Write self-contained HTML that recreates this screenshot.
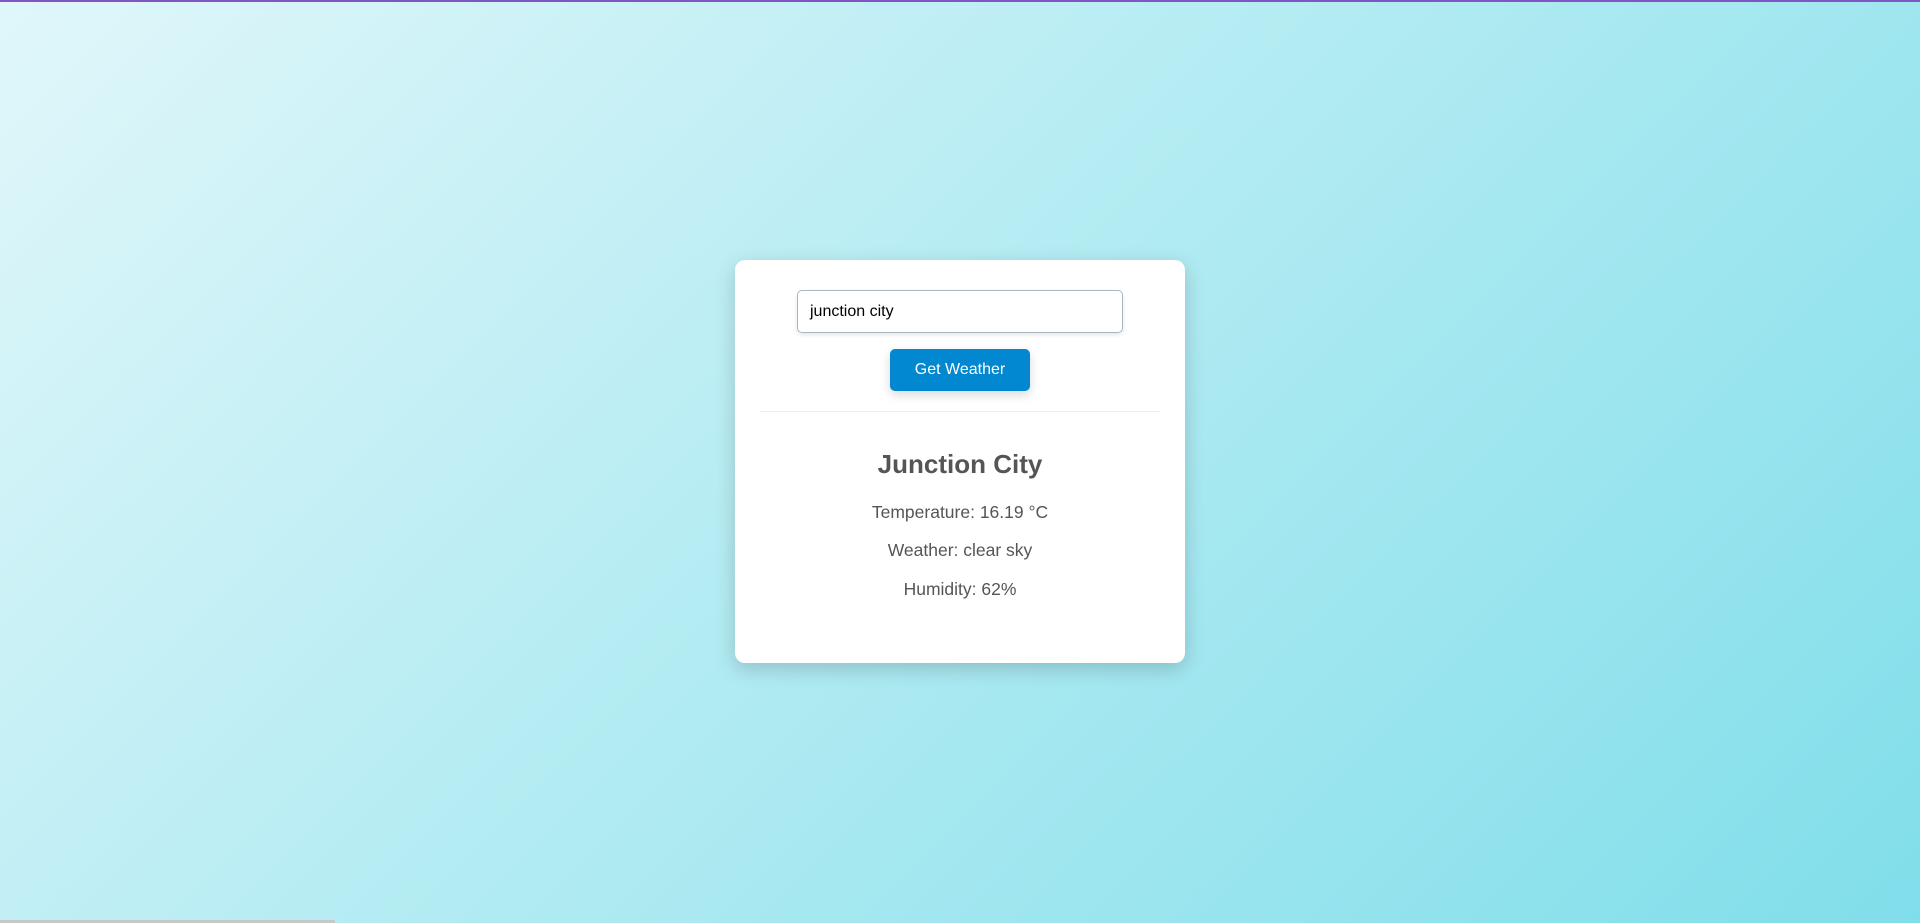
<!DOCTYPE html>
<html><head><style>
html,body{margin:0;height:923px;width:1920px;overflow:hidden}
body{background:linear-gradient(135deg,#e0f7fa 0%,#80deea 100%);font-family:"Liberation Sans",Arial,sans-serif;position:relative}
.top{position:absolute;top:0;left:0;right:0;height:2px;background:#7e57c2}
.bot{position:absolute;bottom:0;left:0;width:335px;height:3px;background:#c8c8c8}
.card{position:absolute;left:735px;top:260px;width:450px;height:403px;background:#fff;border-radius:10px;box-shadow:0 6px 20px rgba(0,0,0,0.18)}
.inp{position:absolute;left:62px;top:30px;border:1px solid #a9b7c2;border-radius:5px;box-shadow:0 2px 4px rgba(0,0,0,0.1);font-size:16px;line-height:41px;padding-left:12px;box-sizing:border-box;width:326px;height:43px;color:#000}
.btn{position:absolute;left:155px;top:89px;width:140px;height:42px;background:#0288d1;border-radius:5px;color:#fff;font-size:16px;text-align:center;line-height:42px;box-shadow:0 4px 10px rgba(0,0,0,0.15)}
.hr{position:absolute;left:25px;top:151px;width:400px;height:1px;background:#eee}
.c{position:absolute;left:0;width:450px;text-align:center;color:#555}
h2{margin:0;font-size:26px;font-weight:bold}
.p{font-size:17.5px}
</style></head><body>
<div class="top"></div>
<div class="bot"></div>
<div class="card">
<div class="inp">junction city</div>
<div class="btn">Get Weather</div>
<div class="hr"></div>
<div class="c" style="top:189px"><h2>Junction City</h2></div>
<div class="c p" style="top:242px">Temperature: 16.19 °C</div>
<div class="c p" style="top:280px">Weather: clear sky</div>
<div class="c p" style="top:319px">Humidity: 62%</div>
</div>
</body></html>
